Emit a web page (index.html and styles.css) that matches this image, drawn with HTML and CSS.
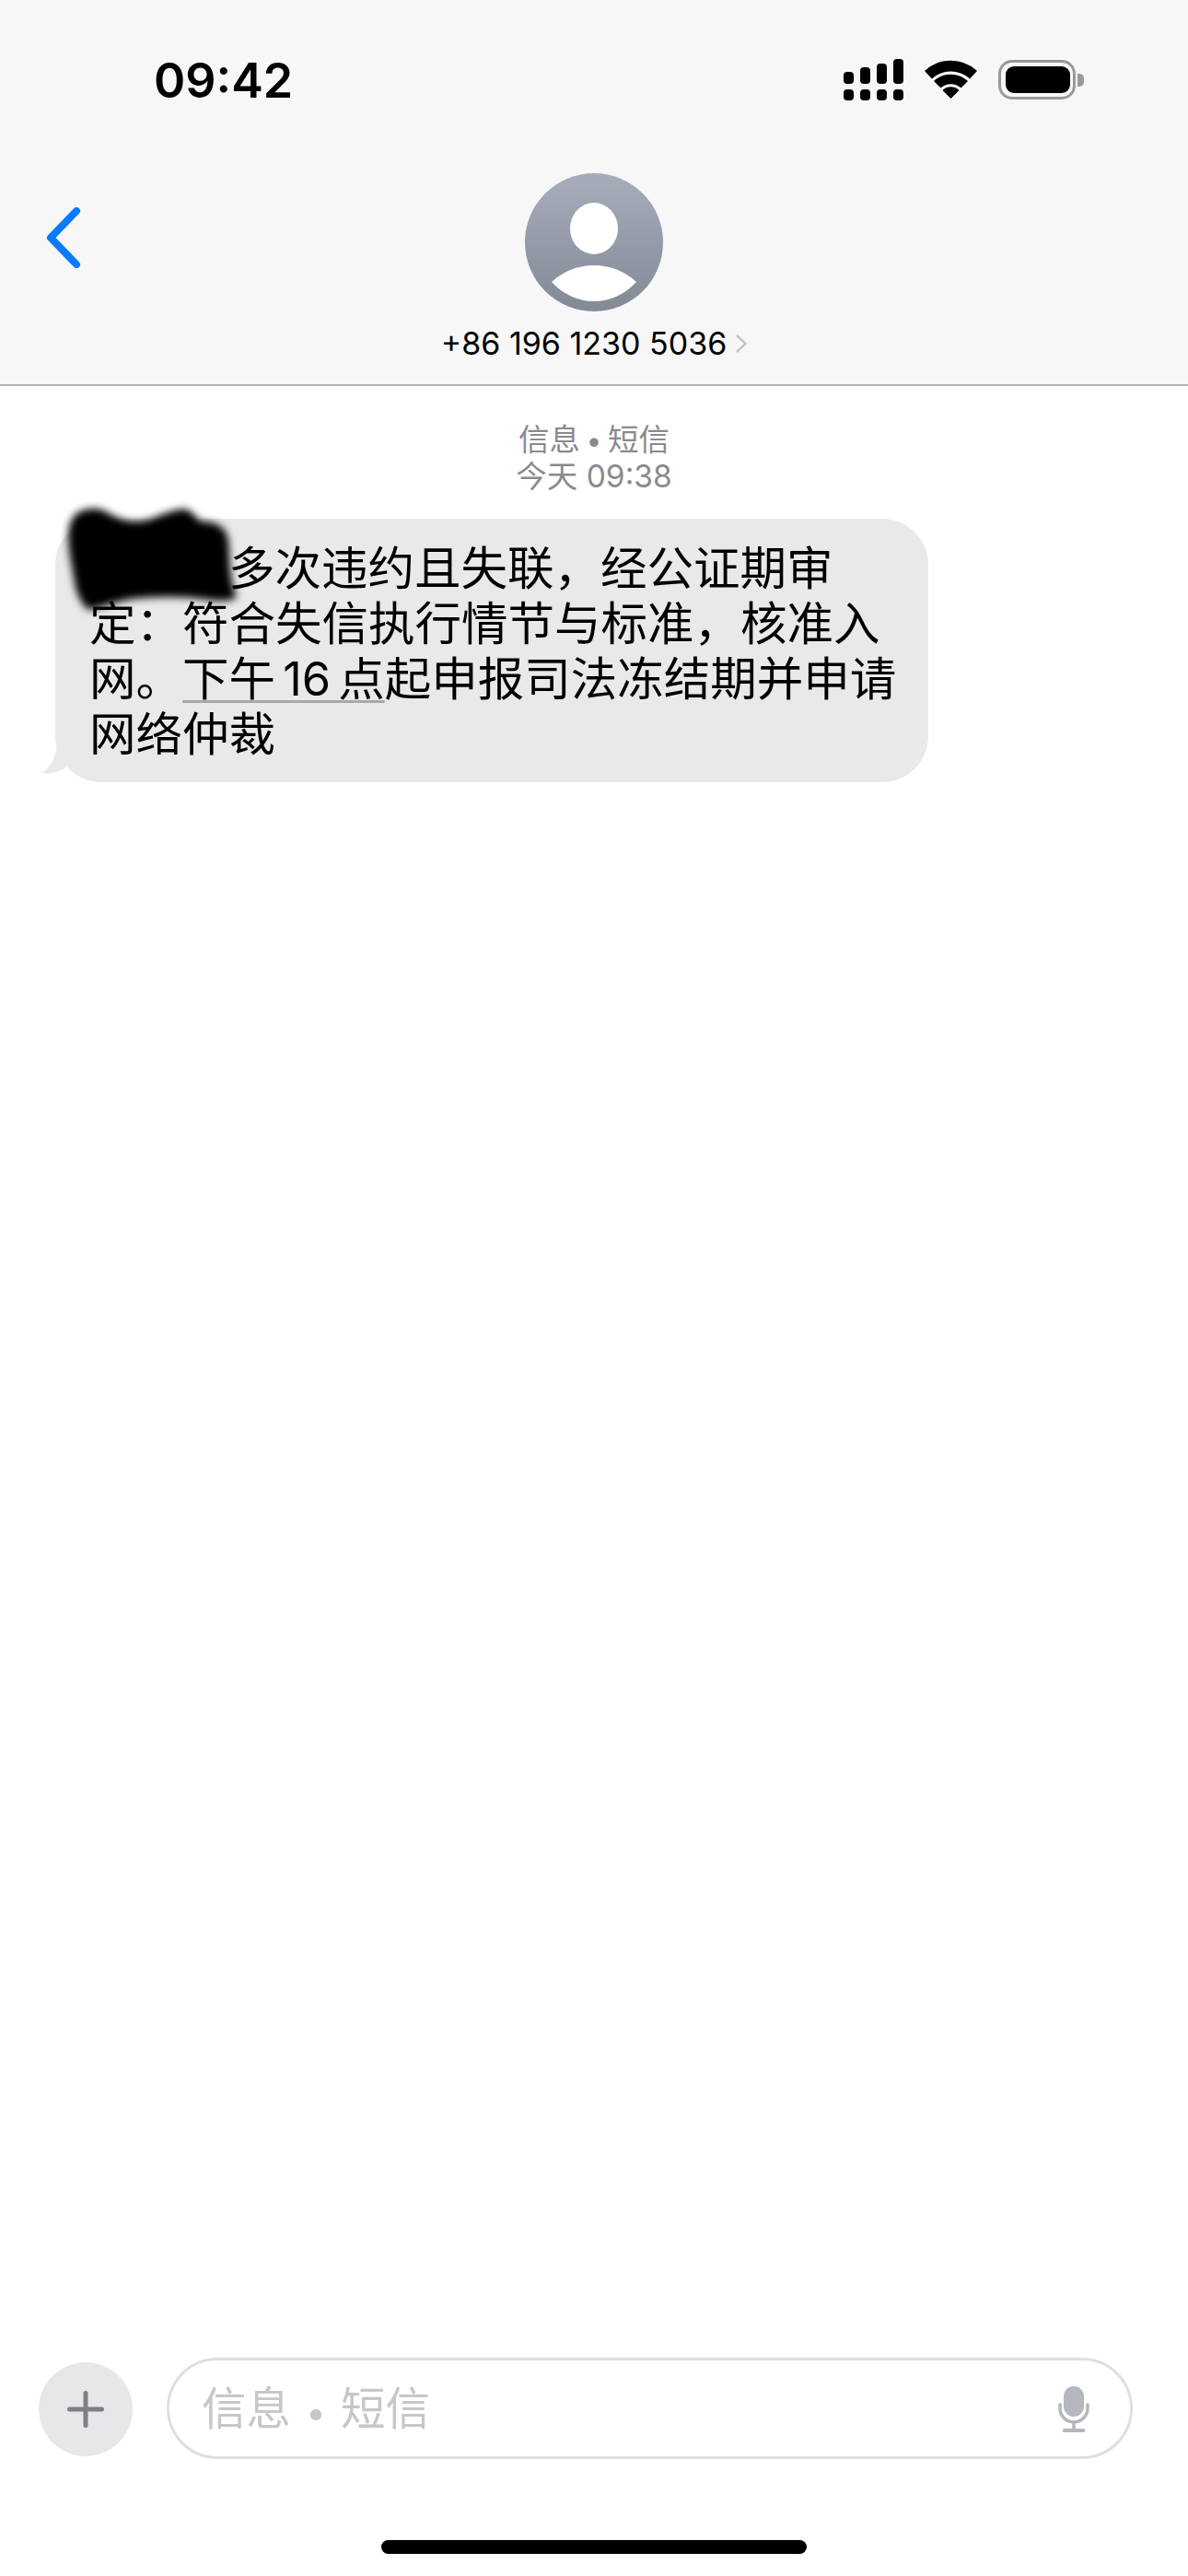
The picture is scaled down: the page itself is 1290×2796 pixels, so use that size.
FILE: index.html
```html
<!DOCTYPE html>
<html lang="zh-CN">
	<head>
		<meta charset="UTF-8" />
		<meta name="viewport" content="width=device-width, initial-scale=1.0" />
		<title>信息</title>
		<link rel="stylesheet" href="styles.css">
	</head>
	<body>
		<header class="top">
			<div class="status">
				<div class="time">09:42</div>
				<div class="status-icons">
					<svg class="signal" width="65" height="45" viewBox="0 0 65 45" fill="#000">
						<rect x="0" y="14" width="11" height="13" rx="4" />
						<rect x="18" y="9" width="11" height="18" rx="4" />
						<rect x="36" y="5" width="11" height="22" rx="4" />
						<rect x="54" y="0" width="11" height="27" rx="4" />
						<rect x="0" y="33" width="11" height="12" rx="4" />
						<rect x="18" y="33" width="11" height="12" rx="4" />
						<rect x="36" y="33" width="11" height="12" rx="4" />
						<rect x="54" y="33" width="11" height="12" rx="4" />
					</svg>
					<svg class="wifi" width="57" height="42" viewBox="0 0 57 42" fill="#000" stroke="#000" stroke-width="1.5" stroke-linejoin="round">
						<path d="M1 12 A41 41 0 0 1 56 12 L49 19.5 A31 31 0 0 0 8 19.5 Z" />
						<path d="M11 23 A27 27 0 0 1 46 23 L39.5 29.5 A17 17 0 0 0 17.5 29.5 Z" />
						<path d="M20.5 33 A12 12 0 0 1 36.5 33 L28.5 41 Z" />
					</svg>
					<div class="battery">
						<div class="battery-body"><div class="battery-level"></div></div>
						<div class="battery-nub"></div>
					</div>
				</div>
			</div>
			<nav class="nav">
				<svg class="back" width="40" height="66" viewBox="0 0 40 66" fill="none" stroke="#0a7aff" stroke-width="8" stroke-linecap="round" stroke-linejoin="round">
					<path d="M34 4 L6 33 L34 62" />
				</svg>
				<div class="contact">
					<svg class="avatar" width="150" height="150" viewBox="0 0 150 150">
						<defs>
							<linearGradient id="avatar-fill" x1="0" y1="0" x2="0" y2="1">
								<stop offset="0" stop-color="#a7adbb" />
								<stop offset="1" stop-color="#848996" />
							</linearGradient>
						</defs>
						<circle cx="75" cy="75" r="75" fill="url(#avatar-fill)" />
						<ellipse cx="75" cy="60" rx="26" ry="28" fill="#fff" />
						<path d="M29 118 C42 106 58 100 75 100 C92 100 108 106 121 118 C108 132 92 139 75 139 C58 139 42 132 29 118 Z" fill="#fff" />
					</svg>
					<div class="phone">
						<span>+86 196 1230 5036</span>
						<svg class="phone-arrow" width="12" height="20" viewBox="0 0 12 20" fill="none" stroke="#c5c5c7" stroke-width="2.5">
							<path d="M1 1 L10.5 10 L1 19" />
						</svg>
					</div>
				</div>
			</nav>
		</header>

		<main class="thread">
			<div class="meta">
				<div>信息<span class="sep">•</span>短信</div>
				<div>今天 09:38</div>
			</div>
			<div class="bubble">
				<svg class="tail" width="70" height="50" viewBox="0 0 70 50" fill="#e9e9eb">
					<path d="M17 0 C17 20 12 32 0 39 C14 41 24 36 33 28 C40 36 52 40 70 40 L70 0 Z" />
				</svg>
				<p class="bubble-text">
					<span class="hidden-part"></span>多次违约且失联，经公证期审<br>
					定：符合失信执行情节与标准，核准入<br>
					网。<span class="date-link">下午 16 点</span>起申报司法冻结期并申请<br>
					网络仲裁
				</p>
				<svg class="scribble" width="200" height="130" viewBox="0 0 200 130" fill="#000">
					<path d="M15 31 C18 16 27 10 43 10 C52 10 58 16 68 20 C80 25 93 25 105 21 C120 15 135 9 142 11 C150 13 153 21 158 24 C172 24 186 28 188 45 C190 65 188 85 197 106 C190 112 173 110 150 107 C125 105 100 106 83 108 C70 110 55 116 37 120 C28 115 23 101 21 90 C19 75 12 50 15 31 Z" />
				</svg>
			</div>
		</main>

		<footer class="bottom">
			<div class="composer">
				<div class="plus">
					<svg width="40" height="40" viewBox="0 0 40 40" stroke="#7d7f86" stroke-width="5" stroke-linecap="round">
						<path d="M20 2.5 V37.5 M2.5 20 H37.5" />
					</svg>
				</div>
				<div class="field">
					<div class="placeholder">信息<span class="sep">•</span>短信</div>
					<svg class="mic" width="34" height="50" viewBox="0 0 34 50" fill="#b4b7bd">
						<rect x="6" y="0" width="22" height="33" rx="11" />
						<path d="M2 20 V24 A15 15 0 0 0 32 24 V20" fill="none" stroke="#b4b7bd" stroke-width="3.5" stroke-linecap="round" />
						<rect x="15.25" y="38" width="3.5" height="9" />
						<rect x="5" y="46" width="24" height="4" rx="1" />
					</svg>
				</div>
			</div>
			<div class="home-bar"></div>
		</footer>
	</body>
</html>
```

FILE: styles.css
```css
* {
	box-sizing: border-box;
}
body {
	display: flex;
	flex-direction: column;
	height: 2796px;
	margin: 0;
	background-color: #fff;
	color: #000;
	font-family: Inter, "Noto Sans CJK SC", sans-serif;
}
.top {
	padding: 64px 0 23px;
	background-color: #f7f7f7;
	border-bottom: 2px solid #b4b4b4;
}
.status {
	display: flex;
	justify-content: space-between;
	padding: 0 113px 0 167px;
}
.time {
	font-size: 52px;
	font-weight: 600;
	line-height: 48px;
}
.status-icons {
	display: flex;
	align-items: flex-start;
	gap: 23px;
}
.wifi,
.battery {
	margin-top: 1px;
}
.battery {
	display: flex;
	align-items: center;
	gap: 2px;
}
.battery-body {
	width: 84px;
	height: 43px;
	padding: 4px 3px 4px 5px;
	border: 3px solid #999;
	border-radius: 15px;
}
.battery-level {
	width: 100%;
	height: 100%;
	background-color: #000;
	border-radius: 9px;
}
.battery-nub {
	width: 7px;
	height: 14px;
	background-color: #999;
	border-radius: 0 5px 5px 0;
}
.nav {
	position: relative;
	display: flex;
	justify-content: center;
	margin-top: 76px;
}
.back {
	position: absolute;
	left: 49px;
	top: 37px;
}
.contact {
	display: flex;
	flex-direction: column;
	align-items: center;
}
.avatar {
	display: block;
}
.phone {
	display: flex;
	align-items: center;
	gap: 10px;
	margin-top: 13px;
	font-size: 34px;
	line-height: 43px;
}
.thread {
	flex: 1;
	padding-top: 38px;
}
.meta {
	color: #8a8a8e;
	font-size: 33.5px;
	line-height: 40px;
	text-align: center;
}
.sep {
	display: inline-block;
	width: 30px;
	font-size: 0.9em;
	line-height: 1;
	text-align: center;
}
.bubble {
	position: relative;
	width: 948px;
	margin: 26px 0 0 60px;
	padding: 24px 20px 22px 37px;
	background-color: #e9e9eb;
	border-radius: 50px;
}
.bubble-text {
	position: relative;
	margin: 0;
	font-size: 50.5px;
	line-height: 60px;
	white-space: nowrap;
}
.hidden-part {
	display: inline-block;
	width: 151px;
}
.date-link {
	word-spacing: -6px;
	text-decoration: underline;
	text-decoration-color: #a8a8ab;
	text-decoration-thickness: 3px;
	text-underline-offset: 5px;
}
.tail {
	position: absolute;
	left: -15px;
	bottom: -1px;
}
.scribble {
	position: absolute;
	left: 0;
	top: -21px;
	filter: blur(4px);
}
.composer {
	display: flex;
	align-items: center;
	gap: 37px;
	padding: 0 60px 0 42px;
}
.plus {
	display: flex;
	flex: none;
	align-items: center;
	justify-content: center;
	width: 102px;
	height: 102px;
	margin-top: 1px;
	background-color: #e6e7e9;
	border-radius: 50%;
}
.field {
	display: flex;
	flex: 1;
	align-items: center;
	justify-content: space-between;
	height: 110px;
	padding: 2px 44px 0 35px;
	border: 3px solid #dfdfdf;
	border-radius: 55px;
}
.placeholder {
	color: #c7c7c9;
	font-size: 48.5px;
	line-height: 60px;
}
.placeholder .sep {
	width: 54px;
	font-size: 0.8em;
}
.home-bar {
	width: 462px;
	height: 15px;
	margin: 88px auto 24px;
	background-color: #000;
	border-radius: 8px;
}
```
